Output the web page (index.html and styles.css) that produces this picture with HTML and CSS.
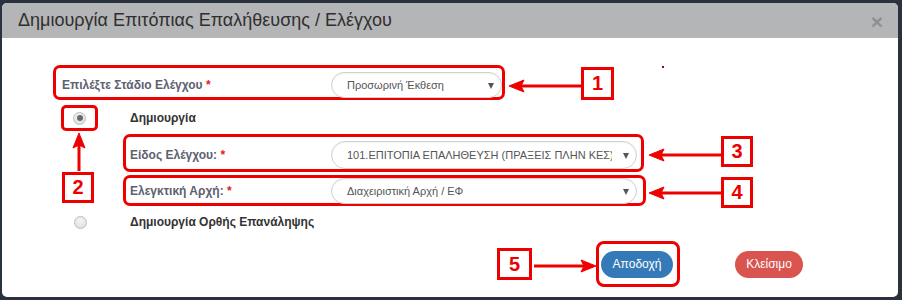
FILE: index.html
```html
<!DOCTYPE html>
<html lang="el">
<head>
<meta charset="utf-8">
<link rel="stylesheet" href="styles.css">
</head>
<body>
<div class="modal">
  <div class="modal-header">
    <h4 class="modal-title">Δημιουργία Επιτόπιας Επαλήθευσης / Ελέγχου</h4>
    <span class="close">×</span>
  </div>
  <div class="modal-body">
    <div class="hl row-stage">
      <label class="lbl lbl-stage">Επιλέξτε Στάδιο Ελέγχου <span class="req">*</span></label>
      <div class="select sel-stage"><span class="sel-text">Προσωρινή Έκθεση</span><span class="caret"></span></div>
    </div>
    <div class="row-radio">
      <div class="hl radio-box"><span class="radio checked"></span></div>
      <span class="opt opt-first">Δημιουργία</span>
    </div>
    <div class="hl row-field row-type">
      <label class="lbl lbl-field">Είδος Ελέγχου: <span class="req">*</span></label>
      <div class="select sel-wide sel-type"><span class="sel-text">101.ΕΠΙΤΟΠΙΑ ΕΠΑΛΗΘΕΥΣΗ (ΠΡΑΞΕΙΣ ΠΛΗΝ ΚΕΣ)</span><span class="caret"></span></div>
    </div>
    <div class="hl row-field row-auth">
      <label class="lbl lbl-field">Ελεγκτική Αρχή: <span class="req">*</span></label>
      <div class="select sel-wide sel-auth"><span class="sel-text">Διαχειριστική Αρχή / ΕΦ</span><span class="caret"></span></div>
    </div>
    <div class="row-radio2">
      <span class="radio"></span>
      <span class="opt opt-second">Δημιουργία Ορθής Επανάληψης</span>
    </div>
    <div class="footer">
      <div class="hl btn-wrap"><button class="btn btn-primary">Αποδοχή</button></div>
      <button class="btn btn-danger">Κλείσιμο</button>
    </div>
  </div>

  <svg class="arrows" width="896" height="294" viewBox="0 0 896 294">
    <g fill="#e00" stroke="#e00">
      <line x1="579" y1="83" x2="518" y2="83" stroke-width="3"/>
      <polygon points="507,83 522,77 519,83 522,89" stroke-width="1"/>
      <line x1="719" y1="152" x2="658" y2="152" stroke-width="3"/>
      <polygon points="647,152 662,146 659,152 662,158" stroke-width="1"/>
      <line x1="719" y1="190" x2="658" y2="190" stroke-width="3"/>
      <polygon points="647,190 662,184 659,190 662,196" stroke-width="1"/>
      <line x1="532" y1="263" x2="584" y2="263" stroke-width="3"/>
      <polygon points="594,263 579,257 582,263 579,269" stroke-width="1"/>
      <line x1="77" y1="168" x2="77" y2="140" stroke-width="3"/>
      <polygon points="77,130 71,145 77,142 83,145" stroke-width="1"/>
    </g>
  </svg>
  <div class="num num1">1</div>
  <div class="num num2">2</div>
  <div class="num num3">3</div>
  <div class="num num4">4</div>
  <div class="num num5">5</div>
  <div class="dot"></div>
</div>
</body>
</html>
```

FILE: styles.css
```css
html, body {
  margin: 0;
  padding: 0;
}
body {
  background: #2a333d;
  width: 902px;
  height: 300px;
  overflow: hidden;
  font-family: "Liberation Sans", Arial, sans-serif;
}
.modal {
  position: relative;
  margin: 3px 0 0 2px;
  width: 896px;
  height: 294px;
  background: #fff;
  border-radius: 5px;
  overflow: hidden;
}
.modal-header {
  height: 35px;
  background: #b4b5b6;
  display: flex;
  align-items: center;
  justify-content: space-between;
  padding: 0 15px 0 16px;
}
.modal-title {
  margin: 0;
  font-size: 18px;
  font-weight: normal;
  color: #2f2f2f;
}
.close {
  font-size: 21px;
  font-weight: bold;
  color: #8e8f90;
  line-height: 1;
  margin-top: 1px;
}
.modal-body {
  padding-top: 27px;
}
.hl {
  border: 3px solid #e00;
  border-radius: 7px;
  box-sizing: border-box;
}
.row-stage {
  margin-left: 51px;
  width: 452px;
  height: 35px;
  display: flex;
  align-items: center;
  padding-top: 5px;
}
.lbl {
  font-size: 12px;
  font-weight: bold;
  color: #5c6170;
  box-sizing: border-box;
}
.req {
  color: #d22;
}
.lbl-stage {
  width: 275px;
  padding-left: 6px;
}
.select {
  position: relative;
  box-sizing: border-box;
  border: 1px solid #d0d0d0;
  border-radius: 14px;
  background: #fff;
  box-shadow: inset 0 1px 2px rgba(0,0,0,0.06);
  display: flex;
  align-items: center;
  padding-left: 15px;
  font-size: 11px;
  color: #555;
}
.sel-text {
  white-space: nowrap;
  overflow: hidden;
  display: block;
}
.caret {
  position: absolute;
  right: 7px;
  top: 50%;
  margin-top: -2px;
  width: 0;
  height: 0;
  border-left: 3.5px solid transparent;
  border-right: 3.5px solid transparent;
  border-top: 6px solid #555;
}
.sel-stage {
  width: 171px;
  height: 26px;
}
.row-radio {
  display: flex;
  align-items: center;
  margin-top: 5px;
  height: 26px;
}
.radio-box {
  margin-left: 59px;
  width: 37px;
  height: 26px;
  border-radius: 5px;
  display: flex;
  align-items: center;
  justify-content: center;
}
.radio {
  display: inline-block;
  width: 13px;
  height: 13px;
  border-radius: 50%;
  box-sizing: border-box;
  border: 1px solid #bdbdbd;
  background: radial-gradient(circle at 50% 35%, #f4f4f4 0%, #dcdcdc 100%);
  position: relative;
}
.radio.checked::after {
  content: "";
  position: absolute;
  left: 2.5px;
  top: 2.5px;
  width: 6px;
  height: 6px;
  border-radius: 50%;
  background: #6a6a6a;
}
.opt {
  font-size: 12px;
  font-weight: bold;
  color: #333;
}
.opt-first {
  margin-left: 32px;
}
.row-field {
  margin-left: 121px;
  display: flex;
  align-items: center;
}
.row-type {
  margin-top: 3px;
  width: 521px;
  height: 38px;
  padding-top: 4px;
}
.row-auth {
  margin-top: 3px;
  width: 523px;
  height: 31px;
  padding-top: 0;
}
.lbl-field {
  width: 205px;
  padding-left: 4px;
}
.sel-wide {
  width: 306px;
}
.sel-type {
  height: 28px;
}
.sel-type .sel-text {
  width: 265px;
}
.sel-auth {
  height: 26px;
}
.row-radio2 {
  display: flex;
  align-items: center;
  margin-top: 8px;
  height: 16px;
}
.row-radio2 .radio {
  margin-left: 72px;
}
.opt-second {
  margin-left: 43px;
}
.footer {
  display: flex;
  align-items: center;
  margin-top: 11px;
}
.btn-wrap {
  margin-left: 594px;
  width: 84px;
  height: 46px;
  display: flex;
  align-items: center;
  padding-left: 2px;
  border-radius: 8px;
}
.btn {
  border: none;
  border-radius: 14px;
  height: 27px;
  color: #fff;
  font-family: "Liberation Sans", Arial, sans-serif;
  font-size: 12px;
  padding: 0;
}
.btn-primary {
  width: 72px;
  background: #357ab8;
}
.btn-danger {
  width: 68px;
  background: #d9534f;
  margin-left: 55px;
}
.arrows {
  position: absolute;
  left: 0;
  top: 0;
  pointer-events: none;
}
.num {
  position: absolute;
  box-sizing: border-box;
  width: 32px;
  height: 31px;
  border: 3px solid #e00;
  color: #e00;
  font-size: 20px;
  font-weight: bold;
  display: flex;
  align-items: center;
  justify-content: center;
  background: #fff;
}
.num1 { left: 579px; top: 64px; width: 33px; height: 33px; }
.num2 { left: 60px; top: 169px; }
.num3 { left: 719px; top: 133px; }
.num4 { left: 719px; top: 174px; }
.num5 { left: 495px; top: 245px; width: 35px; height: 32px; }
.dot {
  position: absolute;
  left: 660px;
  top: 63px;
  width: 2px;
  height: 2px;
  background: #a00;
}
```
